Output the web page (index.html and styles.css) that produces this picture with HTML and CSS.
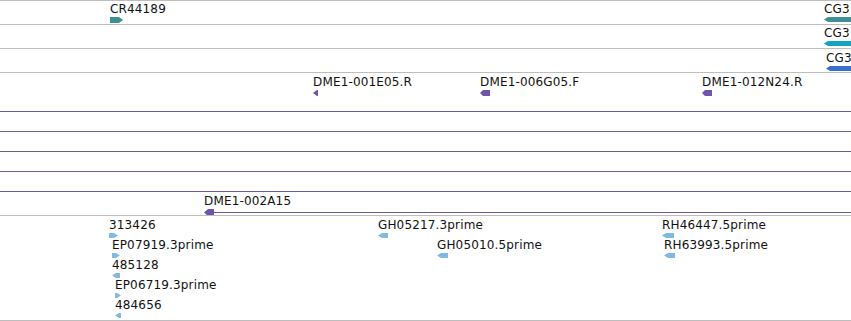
FILE: index.html
```html
<!DOCTYPE html>
<html lang="en">
<head>
    <meta charset="UTF-8">
    <title>Genome tracks</title>
    <link rel="stylesheet" href="styles.css">
</head>
<body>
    <div class="panel">
        <!-- gene models -->
        <div class="row gene">
            <div class="feat" style="left:110px;top:2px">
                <span class="lbl">CR44189</span>
                <svg class="teal" width="13" height="6"><polygon points="0,0 9,0 13,3 9,6 0,6"/></svg>
            </div>
            <div class="feat" style="left:824px;top:2px">
                <span class="lbl">CG3</span>
                <svg class="teal" width="27" height="5"><polygon points="4,0 27,0 27,5 4,5 0,2.5"/></svg>
            </div>
        </div>
        <div class="row gene">
            <div class="feat" style="left:824px;top:2px">
                <span class="lbl">CG3</span>
                <svg class="cyan" width="27" height="5"><polygon points="4,0 27,0 27,5 4,5 0,2.5"/></svg>
            </div>
        </div>
        <div class="row gene">
            <div class="feat" style="left:826px;top:3px">
                <span class="lbl">CG3</span>
                <svg class="blue" width="25" height="5"><polygon points="4,0 25,0 25,5 4,5 0,2.5"/></svg>
            </div>
        </div>

        <!-- BAC ends -->
        <div class="row bac">
            <div class="feat" style="left:313px;top:3px">
                <span class="lbl">DME1-001E05.R</span>
                <svg class="violet" width="5" height="6"><polygon points="4,0 5,0 5,6 4,6 0,3"/></svg>
            </div>
            <div class="feat" style="left:480px;top:3px">
                <span class="lbl">DME1-006G05.F</span>
                <svg class="violet" width="10" height="6"><polygon points="3,0 10,0 10,6 3,6 0,3"/></svg>
            </div>
            <div class="feat" style="left:702px;top:3px">
                <span class="lbl">DME1-012N24.R</span>
                <svg class="violet" width="10" height="6"><polygon points="3,0 10,0 10,6 3,6 0,3"/></svg>
            </div>
        </div>
        <div class="row span"></div>
        <div class="row span"></div>
        <div class="row span"></div>
        <div class="row span"></div>
        <div class="row clone">
            <div class="feat" style="left:204px;top:3px">
                <span class="lbl">DME1-002A15</span>
                <svg class="violet" width="647" height="7"><polygon points="4,0 10,0 10,7 4,7 0,3.5"/><rect x="10" y="3" width="637" height="1"/></svg>
            </div>
        </div>

        <!-- ESTs -->
        <div class="row est">
            <div class="feat" style="left:109px;top:3px">
                <span class="lbl">313426</span>
                <svg class="sky" width="9" height="5"><polygon points="0,0 5,0 9,2.5 5,5 0,5"/></svg>
            </div>
            <div class="feat" style="left:112px;top:23px">
                <span class="lbl">EP07919.3prime</span>
                <svg class="sky" width="8" height="5"><polygon points="0,0 4,0 8,2.5 4,5 0,5"/></svg>
            </div>
            <div class="feat" style="left:112px;top:43px">
                <span class="lbl">485128</span>
                <svg class="sky" width="8" height="5"><polygon points="4,0 8,0 8,5 4,5 0,2.5"/></svg>
            </div>
            <div class="feat" style="left:115px;top:63px">
                <span class="lbl">EP06719.3prime</span>
                <svg class="sky" width="6" height="5"><polygon points="0,0 2,0 6,2.5 2,5 0,5"/></svg>
            </div>
            <div class="feat" style="left:115px;top:83px">
                <span class="lbl">484656</span>
                <svg class="sky" width="6" height="5"><polygon points="4,0 6,0 6,5 4,5 0,2.5"/></svg>
            </div>
            <div class="feat" style="left:378px;top:3px">
                <span class="lbl">GH05217.3prime</span>
                <svg class="sky" width="10" height="5"><polygon points="4,0 10,0 10,5 4,5 0,2.5"/></svg>
            </div>
            <div class="feat" style="left:437px;top:23px">
                <span class="lbl">GH05010.5prime</span>
                <svg class="sky" width="11" height="5"><polygon points="4,0 11,0 11,5 4,5 0,2.5"/></svg>
            </div>
            <div class="feat" style="left:662px;top:3px">
                <span class="lbl">RH46447.5prime</span>
                <svg class="sky" width="12" height="5"><polygon points="4,0 12,0 12,5 4,5 0,2.5"/></svg>
            </div>
            <div class="feat" style="left:664px;top:23px">
                <span class="lbl">RH63993.5prime</span>
                <svg class="sky" width="11" height="5"><polygon points="4,0 11,0 11,5 4,5 0,2.5"/></svg>
            </div>
        </div>
        <div class="row end"></div>
    </div>
</body>
</html>
```

FILE: styles.css
```css
* {
    margin: 0;
    padding: 0;
    box-sizing: border-box;
}

body {
    background: #fff;
    font-family: 'DejaVu Sans', 'Liberation Sans', sans-serif;
    font-size: 12px;
    color: #111;
    overflow: hidden;
}

.panel {
    width: 851px;
}

.row {
    position: relative;
    border-top: 1px solid #bdbdbd;
}

.gene {
    height: 24px;
}

.bac {
    height: 39px;
}

.span {
    height: 20px;
    border-top-color: #6a58a0;
}

.clone {
    height: 24px;
    border-top-color: #6a58a0;
}

.est {
    height: 105px;
}

.end {
    height: 1px;
}

.feat {
    position: absolute;
    display: flex;
    flex-direction: column;
    align-items: flex-start;
}

.lbl {
    display: block;
    line-height: 13px;
    white-space: nowrap;
    letter-spacing: 0.15px;
}

.feat svg {
    display: block;
    margin-top: 1px;
}

.teal { fill: #3f8f95; }
.cyan { fill: #12a2c2; }
.blue { fill: #3a6fd0; }
.violet { fill: #6e55a8; }
.sky { fill: #82b9e0; }
```
